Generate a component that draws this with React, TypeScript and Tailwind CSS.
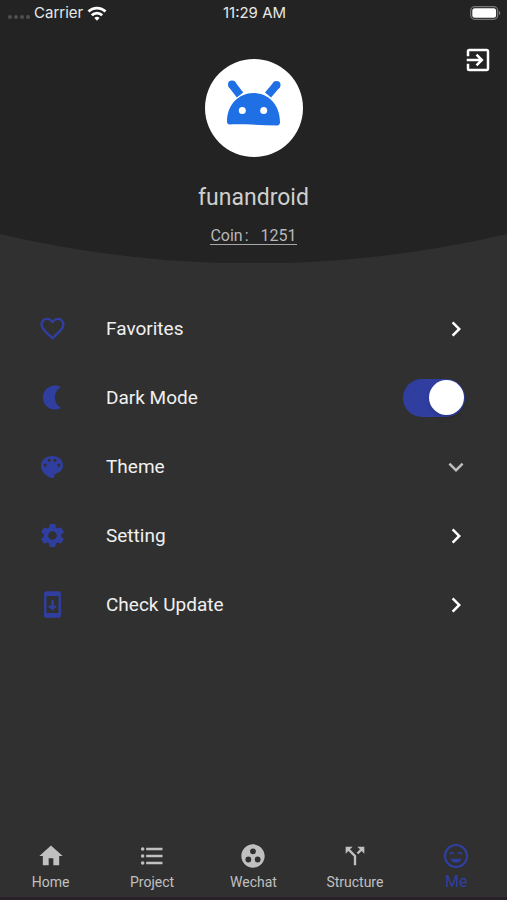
import { useState } from "react";
import type { ReactNode } from "react";
import {
  MdBrightness2,
  MdCallSplit,
  MdChevronRight,
  MdExitToApp,
  MdExpandMore,
  MdFavoriteBorder,
  MdFormatListBulleted,
  MdGroupWork,
  MdHome,
  MdSettings,
  MdSystemUpdate,
} from "react-icons/md";

function StatusBar() {
  return (
    <div className="grid h-[26px] grid-cols-3 items-center pr-1.5 pl-2 font-[Inter,'Liberation_Sans',sans-serif] text-[15px] text-[#e8e8e8]">
      <div className="flex items-center">
        <div className="mt-2 flex gap-[2px]">
          {[0, 1, 2, 3].map((dot) => (
            <span key={dot} className="size-1 rounded-full bg-[#505050]" />
          ))}
        </div>
        <span className="ml-1">Carrier</span>
        <svg viewBox="0 0 20 15" className="ml-1 h-[15px] w-5" fill="none" stroke="#fff" strokeWidth="2.8">
          <path d="M1.500 5.600a12 12 0 0 1 17 0" />
          <path d="M4.800 9.300a7.400 7.400 0 0 1 10.400 0" />
          <path d="M10 14.800 7.400 12.100a3.700 3.700 0 0 1 5.200 0Z" fill="#fff" stroke="none" />
        </svg>
      </div>
      <span className="text-center">11:29 AM</span>
      <svg viewBox="0 0 31 14" className="h-[14px] w-[31px] justify-self-end">
        <rect x="0.7" y="0.7" width="27" height="12.6" rx="4" fill="none" stroke="#777" strokeWidth="1.3" />
        <rect x="2.3" y="2.3" width="23.8" height="9.4" rx="2.5" fill="#fff" />
        <path d="M29 5v4c1.800-.6 1.800-3.400 0-4Z" fill="#777" />
      </svg>
    </div>
  );
}

function AndroidHead() {
  return (
    <svg viewBox="0 0 98 98" className="size-[98px]" role="img" aria-label="funandroid avatar">
      <circle cx="49" cy="49" r="49" fill="#fff" />
      <g stroke="#1f6fe5" strokeWidth="8">
        <path d="M27 25.500 35 36" />
        <path d="M71.500 26 63 36" />
      </g>
      <circle cx="27" cy="25.500" r="4" fill="#1f6fe5" />
      <circle cx="71.500" cy="26" r="4" fill="#1f6fe5" />
      <path
        d="M22 62.500C22 46 33.500 34 48.500 34S75 46 75 63c0 2-1 3.500-3 3.500-15-.5-30-1.300-47-1.100-2 0-3-1-3-2.900Z"
        fill="#1f6fe5"
      />
      <circle cx="37.300" cy="51.500" r="3.500" fill="#fff" />
      <circle cx="58.700" cy="51.500" r="3.500" fill="#fff" />
    </svg>
  );
}

function PaletteIcon() {
  return (
    <svg viewBox="0 0 24 24" width="24" height="24" fill="currentColor" fillRule="evenodd">
      <path d="M12.500 1C6 1 1 5 1 11c0 4 2 6.500 4.500 8.500C8 21.500 9.500 23 12 23c2.800 0 2.300-2.300 2.800-3.600.8-1.500 3.400-1.200 5.400-3C22 14.800 23 12.600 23 10.200 23 5 18.500 1 12.500 1ZM5.200 8.400a1.600 1.600 0 1 1 0 3.200 1.600 1.600 0 0 1 0-3.200Zm4-4.700a1.600 1.600 0 1 1 0 3.200 1.600 1.600 0 0 1 0-3.200Zm5.800 0a1.600 1.600 0 1 1 0 3.200 1.600 1.600 0 0 1 0-3.200Zm3.900 4.900a1.600 1.600 0 1 1 0 3.200 1.600 1.600 0 0 1 0-3.200Z" />
    </svg>
  );
}

function SmileIcon({ size }: { size: number }) {
  return (
    <svg viewBox="0 0 28 28" width={size} height={size} fill="none" stroke="currentColor">
      <circle cx="14" cy="14" r="11" strokeWidth="2.200" />
      <path d="M7.800 12.200q2-2.600 4.200-.4M16 11.800q2.200-2.200 4.200.4" strokeWidth="1.500" />
      <path d="M8.500 16.800h11c-.9 2.500-2.900 4-5.500 4s-4.600-1.500-5.500-4Z" fill="currentColor" stroke="none" />
    </svg>
  );
}

function Header() {
  return (
    <header className="grid">
      <svg
        viewBox="0 0 100 262"
        preserveAspectRatio="none"
        className="col-start-1 row-start-1 h-0 min-h-full w-full"
        aria-hidden="true"
      >
        <path d="M0 0H100V233Q50 292 0 233Z" fill="#232323" />
      </svg>
      <div className="col-start-1 row-start-1 pb-[18px]">
        <StatusBar />
        <div className="flex h-[33px] items-end justify-end px-3.5">
          <button type="button" aria-label="Log out" className="-mb-4 text-white">
            <MdExitToApp size={30} />
          </button>
        </div>
        <div className="flex flex-col items-center">
          <AndroidHead />
          <h1 className="mt-[26px] text-[23px] leading-[30px] text-[#cfcfcf]">funandroid</h1>
          <a
            href="#coin"
            className="mt-[15px] flex border-b border-[#a8a8a8] text-base leading-4 text-[#b8b8b8]"
          >
            Coin<span className="mr-3 ml-0.5">:</span>1251
          </a>
        </div>
      </div>
    </header>
  );
}

type RowProps = { icon: ReactNode; label: string; end: ReactNode };

const rowStyle =
  "grid h-[69px] w-full grid-cols-[32px_1fr_auto] items-center gap-x-[38px] px-9 text-left text-[19px] text-[#f0f0f0]";

function RowContent({ icon, label, end }: RowProps) {
  return (
    <>
      <span className="flex justify-center text-[#303f9f]">{icon}</span>
      <span className="pt-0.5">{label}</span>
      {end}
    </>
  );
}

function ButtonRow(props: RowProps) {
  return (
    <li>
      <button type="button" className={rowStyle}>
        <RowContent {...props} />
      </button>
    </li>
  );
}

function Menu() {
  const [dark, setDark] = useState(true);
  const next = <MdChevronRight size={30} className="text-white" />;
  return (
    <ul className="mt-[31px] flex-1">
      <ButtonRow icon={<MdFavoriteBorder size={29} />} label="Favorites" end={next} />
      <li>
        <label className={rowStyle}>
          <RowContent
            icon={<MdBrightness2 size={29} className="-scale-x-100" />}
            label="Dark Mode"
            end={
              <input
                type="checkbox"
                role="switch"
                checked={dark}
                onChange={(event) => setDark(event.target.checked)}
                className="mr-1.5 flex h-[38px] w-[62px] appearance-none items-center rounded-full bg-[#666] p-px before:size-[35px] before:rounded-full before:bg-white before:shadow-md checked:justify-end checked:bg-[#303f9f]"
              />
            }
          />
        </label>
      </li>
      <ButtonRow
        icon={<PaletteIcon />}
        label="Theme"
        end={<MdExpandMore size={30} className="text-[#bdbdbd]" />}
      />
      <ButtonRow icon={<MdSettings size={29} />} label="Setting" end={next} />
      <ButtonRow icon={<MdSystemUpdate size={29} />} label="Check Update" end={next} />
    </ul>
  );
}

const tabs = [
  { label: "Home", Icon: MdHome },
  { label: "Project", Icon: MdFormatListBulleted },
  { label: "Wechat", Icon: MdGroupWork },
  { label: "Structure", Icon: MdCallSplit },
  { label: "Me", Icon: SmileIcon },
];

function TabBar() {
  return (
    <nav className="grid grid-cols-5 border-b-3 border-[#2a2029] pb-[5px]">
      {tabs.map(({ label, Icon }) => (
        <button
          key={label}
          type="button"
          aria-current={label === "Me" ? "page" : undefined}
          className="flex flex-col items-center gap-0.5 text-sm leading-5 text-[#c0c0c0] aria-[current=page]:text-base aria-[current=page]:leading-5 aria-[current=page]:text-[#303f9f]"
        >
          <Icon size={28} />
          {label}
        </button>
      ))}
    </nav>
  );
}

export default function App() {
  return (
    <div className="flex min-h-screen flex-col bg-[#303030] font-[Roboto,'Liberation_Sans',sans-serif]">
      <Header />
      <main className="flex flex-1 flex-col">
        <Menu />
      </main>
      <TabBar />
    </div>
  );
}
